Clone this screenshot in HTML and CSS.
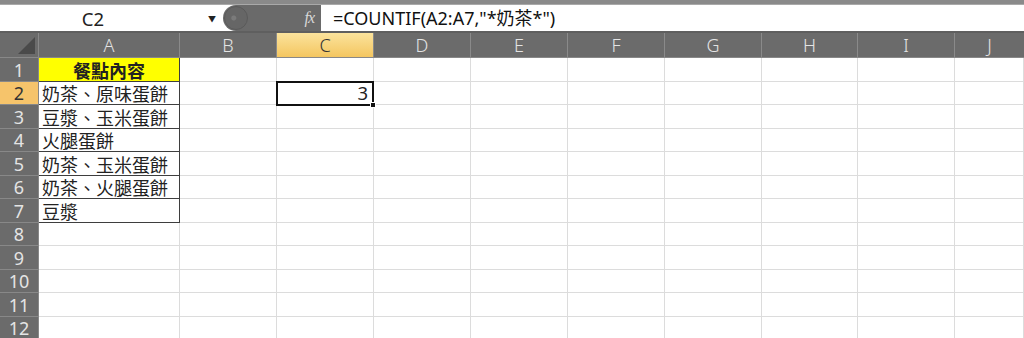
FILE: index.html
```html
<!DOCTYPE html>
<html lang="zh-Hant">
<head>
  <meta charset="UTF-8" />
  <title>COUNTIF</title>
  <link rel="stylesheet" href="styles.css">
</head>
<body>
  <div class="top-strip"></div>
  <div class="formula-bar">
    <div class="name-box">
      <span class="name">C2</span>
      <span class="drop">&#9660;</span>
    </div>
    <div class="fx-pill">
      <span class="knob"></span>
      <span class="fx">fx</span>
    </div>
    <div class="formula">=COUNTIF(A2:A7,"*奶茶*")</div>
  </div>

  <div class="sheet">
    <div class="corner"><span class="tri"></span></div>
    <div class="ch">A</div><div class="ch">B</div><div class="ch active">C</div><div class="ch">D</div><div class="ch">E</div><div class="ch">F</div><div class="ch">G</div><div class="ch">H</div><div class="ch">I</div><div class="ch last">J</div>

    <div class="rh">1</div><div class="c a title">餐點內容</div><div class="c"></div><div class="c"></div><div class="c"></div><div class="c"></div><div class="c"></div><div class="c"></div><div class="c"></div><div class="c"></div><div class="c"></div>
    <div class="rh active">2</div><div class="c a">奶茶、原味蛋餅</div><div class="c"></div><div class="c selected">3<span class="handle"></span></div><div class="c"></div><div class="c"></div><div class="c"></div><div class="c"></div><div class="c"></div><div class="c"></div><div class="c"></div>
    <div class="rh">3</div><div class="c a">豆漿、玉米蛋餅</div><div class="c"></div><div class="c"></div><div class="c"></div><div class="c"></div><div class="c"></div><div class="c"></div><div class="c"></div><div class="c"></div><div class="c"></div>
    <div class="rh">4</div><div class="c a">火腿蛋餅</div><div class="c"></div><div class="c"></div><div class="c"></div><div class="c"></div><div class="c"></div><div class="c"></div><div class="c"></div><div class="c"></div><div class="c"></div>
    <div class="rh">5</div><div class="c a">奶茶、玉米蛋餅</div><div class="c"></div><div class="c"></div><div class="c"></div><div class="c"></div><div class="c"></div><div class="c"></div><div class="c"></div><div class="c"></div><div class="c"></div>
    <div class="rh">6</div><div class="c a">奶茶、火腿蛋餅</div><div class="c"></div><div class="c"></div><div class="c"></div><div class="c"></div><div class="c"></div><div class="c"></div><div class="c"></div><div class="c"></div><div class="c"></div>
    <div class="rh">7</div><div class="c a">豆漿</div><div class="c"></div><div class="c"></div><div class="c"></div><div class="c"></div><div class="c"></div><div class="c"></div><div class="c"></div><div class="c"></div><div class="c"></div>
    <div class="rh">8</div><div class="c"></div><div class="c"></div><div class="c"></div><div class="c"></div><div class="c"></div><div class="c"></div><div class="c"></div><div class="c"></div><div class="c"></div><div class="c"></div>
    <div class="rh">9</div><div class="c"></div><div class="c"></div><div class="c"></div><div class="c"></div><div class="c"></div><div class="c"></div><div class="c"></div><div class="c"></div><div class="c"></div><div class="c"></div>
    <div class="rh">10</div><div class="c"></div><div class="c"></div><div class="c"></div><div class="c"></div><div class="c"></div><div class="c"></div><div class="c"></div><div class="c"></div><div class="c"></div><div class="c"></div>
    <div class="rh">11</div><div class="c"></div><div class="c"></div><div class="c"></div><div class="c"></div><div class="c"></div><div class="c"></div><div class="c"></div><div class="c"></div><div class="c"></div><div class="c"></div>
    <div class="rh">12</div><div class="c"></div><div class="c"></div><div class="c"></div><div class="c"></div><div class="c"></div><div class="c"></div><div class="c"></div><div class="c"></div><div class="c"></div><div class="c"></div>
  </div>
</body>
</html>
```

FILE: styles.css
```css
* {
  box-sizing: border-box;
}

body {
  margin: 0;
  width: 1024px;
  height: 338px;
  overflow: hidden;
  background: #fff;
  font-family: "Noto Sans", "Noto Sans CJK TC", sans-serif;
  color: #222;
}

.top-strip {
  height: 5px;
  background: #8a8a8a;
  border-bottom: 1px solid #a9a9a9;
}

.formula-bar {
  display: flex;
  height: 28px;
  background: #fff;
  border-bottom: 2px solid #5f5f5f;
}

.name-box {
  width: 223px;
  display: flex;
  align-items: center;
}
.name-box .name {
  flex: 1;
  text-align: center;
  font-size: 18.5px;
  padding-right: 22px;
}
.name-box .drop {
  font-size: 8px;
  color: #222;
  margin-right: 7px;
}

.fx-pill {
  width: 98px;
  height: 26px;
  background: #6a6a6a;
  border-radius: 13px 0 0 13px;
  display: flex;
  align-items: center;
  justify-content: space-between;
  padding: 0 7px 0 1px;
}
.fx-pill .knob {
  width: 24px;
  height: 24px;
  border-radius: 50%;
  border: 1px solid #5a5a5a;
  background: radial-gradient(circle at 40% 50%, #7a7a7a 0 2px, #666 3px);
}
.fx-pill .fx {
  font-family: "Liberation Serif", serif;
  font-style: italic;
  font-size: 16px;
  color: #d8d8d8;
  letter-spacing: -1px;
}

.formula {
  padding-left: 12px;
  font-size: 18px;
  line-height: 26px;
  color: #111;
}

.sheet {
  display: grid;
  grid-template-columns: 39px 141px 97px 97px 97px 97px 97px 97px 96px 97px 1fr;
  grid-template-rows: 25px repeat(6, 24px 23px);
}

.corner {
  background: #6b6b6b;
  border-right: 1px solid #888;
  border-bottom: 1px solid #888;
  position: relative;
}
.corner .tri {
  position: absolute;
  right: 3px;
  bottom: 3px;
  width: 17px;
  height: 17px;
  background: #4a4a4a;
  clip-path: polygon(100% 0, 100% 100%, 0 100%);
}

.ch {
  background: #6b6b6b;
  color: #e4e4e4;
  border-right: 1px solid #8a8a8a;
  border-bottom: 1px solid #888;
  font-size: 18px;
  font-weight: 300;
  display: flex;
  align-items: center;
  justify-content: center;
}
.ch.active {
  background: linear-gradient(#fbe39c, #f4c660);
  color: #333;
}
.ch.last {
  border-right: none;
}

.rh {
  background: #6b6b6b;
  color: #e4e4e4;
  border-right: 1px solid #888;
  border-bottom: 1px solid #888;
  font-size: 18px;
  line-height: 1;
  display: flex;
  align-items: center;
  justify-content: center;
}
.rh.active {
  background: #f6c46b;
  color: #333;
}

.c {
  border-right: 1px solid #dcdcdc;
  border-bottom: 1px solid #dcdcdc;
  font-family: "Noto Sans CJK TC", sans-serif;
  font-size: 18px;
  line-height: 1;
  white-space: nowrap;
  display: flex;
  align-items: center;
}

.c.a {
  border-right-color: #3e3e3e;
  border-bottom-color: #3e3e3e;
  padding-left: 3px;
}

.c.title {
  background: #ffff00;
  font-weight: bold;
  justify-content: center;
  padding-left: 0;
}

.c.selected {
  position: relative;
  justify-content: flex-end;
  padding-right: 4px;
  border: 2px solid #111;
  margin: -1px 0 -1px -1px;
  font-family: "Noto Sans", sans-serif;
  font-size: 18.5px;
}
.c.selected .handle {
  position: absolute;
  right: -4px;
  bottom: -4px;
  width: 6px;
  height: 6px;
  background: #111;
  border: 1px solid #fff;
}
```
